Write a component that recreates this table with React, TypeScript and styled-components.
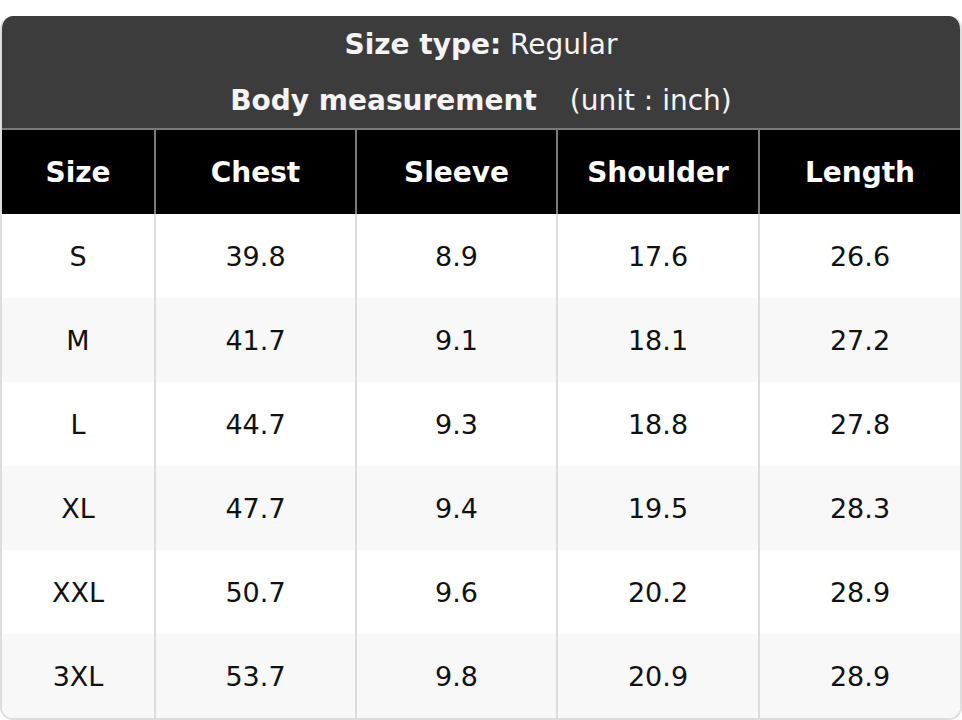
import * as React from 'react';
import styled, { createGlobalStyle } from 'styled-components';

const GlobalStyle = createGlobalStyle`
  html, body {
    margin: 0;
    padding: 0;
    background: #ffffff;
  }
  body {
    font-family: 'DejaVu Sans', 'Liberation Sans', sans-serif;
  }
`;

const columns = ['Size', 'Chest', 'Sleeve', 'Shoulder', 'Length'];

const rows: string[][] = [
  ['S', '39.8', '8.9', '17.6', '26.6'],
  ['M', '41.7', '9.1', '18.1', '27.2'],
  ['L', '44.7', '9.3', '18.8', '27.8'],
  ['XL', '47.7', '9.4', '19.5', '28.3'],
  ['XXL', '50.7', '9.6', '20.2', '28.9'],
  ['3XL', '53.7', '9.8', '20.9', '28.9'],
];

const App: React.FC = () => (
  <Page>
    <GlobalStyle />
    <Card>
      <Caption>
        <CaptionLine>
          <strong>Size type:</strong> Regular
        </CaptionLine>
        <CaptionLine>
          <strong>Body measurement</strong>
          <Unit>(unit : inch)</Unit>
        </CaptionLine>
      </Caption>
      <HeadRow>
        {columns.map((c) => (
          <HeadCell key={c}>{c}</HeadCell>
        ))}
      </HeadRow>
      {rows.map((r, i) => (
        <BodyRow key={r[0]} $striped={i % 2 === 1}>
          {r.map((v, j) => (
            <BodyCell key={j}>{v}</BodyCell>
          ))}
        </BodyRow>
      ))}
    </Card>
  </Page>
);

export default App;

const Page = styled.div`
  padding-top: 16px;
`;

const Card = styled.div`
  width: 962px;
  box-sizing: border-box;
  border: 2px solid #dddddd;
  border-top: none;
  border-radius: 13px;
  overflow: hidden;
  background: #ffffff;
`;

const Caption = styled.div`
  background: #3c3c3c;
  color: #f4f4f4;
  margin: 0 -2px;
  border-bottom: 2px solid #7a7a7a;
  font-size: 28px;
`;

const CaptionLine = styled.div`
  height: 56px;
  display: flex;
  align-items: center;
  justify-content: center;
  white-space: pre;

  strong {
    font-weight: bold;
  }
`;

const Unit = styled.span`
  margin-left: 33px;
`;

const gridCols = '152px 201px 201px 202px 1fr';

const HeadRow = styled.div`
  display: grid;
  grid-template-columns: ${gridCols};
  height: 84px;
  background: #000000;
  margin: 0 -2px;
  border-left: 2px solid #000;
  border-right: 2px solid #000;
`;

const HeadCell = styled.div`
  display: flex;
  align-items: center;
  justify-content: center;
  box-sizing: border-box;
  color: #ffffff;
  font-weight: bold;
  font-size: 28px;

  & + & {
    border-left: 2px solid #7a7a7a;
  }
`;

const BodyRow = styled.div<{ $striped: boolean }>`
  display: grid;
  grid-template-columns: ${gridCols};
  height: 84px;
  background: ${(p) => (p.$striped ? '#f8f8f8' : '#ffffff')};
`;

const BodyCell = styled.div`
  display: flex;
  align-items: center;
  justify-content: center;
  box-sizing: border-box;
  color: #111111;
  font-size: 27px;

  & + & {
    border-left: 2px solid #dddddd;
  }
`;
